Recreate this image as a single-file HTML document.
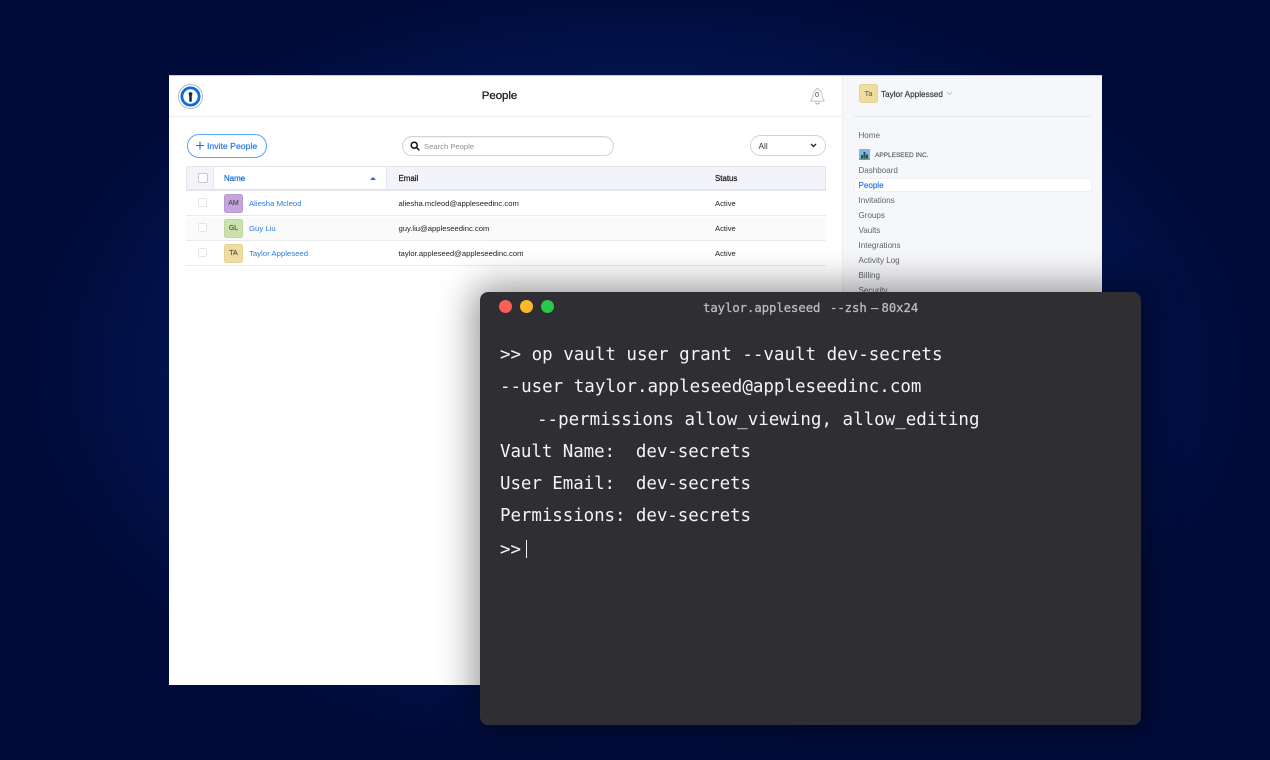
<!DOCTYPE html>
<html><head><meta charset="utf-8"><style>
*{box-sizing:border-box}
html,body{margin:0;padding:0}
body{width:1270px;height:760px;overflow:hidden;position:relative;background:radial-gradient(ellipse 610px 390px at 640px 370px,#062a64 0%,#05235c 45%,#02134c 75%,#000b3a 100%),#000b3a;font-family:"Liberation Sans",sans-serif}
.a{position:absolute;white-space:nowrap}
#app{position:absolute;left:169px;top:75px;width:933px;height:610px;background:#fff;border-top:1px solid #c9cbe0;overflow:hidden;filter:blur(.3px)}
#side{position:absolute;left:673px;top:0;width:260px;height:610px;background:#f6f7fb;border-left:1px solid #eceef2}
.t{font-size:7.65px;color:#222;line-height:10px;margin-top:1px}
.h{font-size:7.9px;color:#1e1e1e;line-height:10px;-webkit-text-stroke:.25px currentColor;margin-top:1px}
.l{font-size:7.75px;color:#1a6fd8;line-height:10px;margin-top:1px}
.nav{font-size:8.05px;color:#5f6368;line-height:10px;margin-top:1px}
.ln{position:absolute;height:1.3px;background:#e9eaec}
.cb{position:absolute;width:9px;height:9px;border:1px solid #e4e5e8;border-radius:2px;background:#fff}
.av{position:absolute;width:19px;height:19px;border-radius:2.5px;font-size:7px;text-align:center;color:#555;-webkit-text-stroke:.2px #555;line-height:18px}
#term{position:absolute;left:480px;top:292px;width:661px;height:433px;background:#2f2e33;border-radius:8px;font-family:"DejaVu Sans Mono","Liberation Mono",monospace;color:#f4f4f4}
.c{position:absolute;top:8px;width:13px;height:13px;border-radius:50%}
.tl{position:absolute;left:20px;font-size:17.5px;line-height:24px;white-space:pre}
.tt{position:absolute;top:8.5px;font-size:12.2px;line-height:15px;color:#bcbcbe;-webkit-text-stroke:.3px #bcbcbe;white-space:pre}
</style></head><body>
<div id="app">
<svg class="a" style="left:9px;top:8px" width="25" height="25" viewBox="0 0 25 25"><circle cx="12.5" cy="12.5" r="12" fill="#fff" stroke="#b6bac0"/><circle cx="12.5" cy="12.5" r="8.6" fill="none" stroke="#0a6be0" stroke-width="2.8"/><circle cx="12.5" cy="12.5" r="6.4" fill="#fff"/><circle cx="12.5" cy="10" r="1.9" fill="#0c2a5e"/><rect x="11.2" y="9" width="2.6" height="9" rx="1.2" fill="#0c2a5e"/></svg>
<div class="a" style="left:0;width:661px;top:13px;text-align:center;font-size:11.4px;color:#222;line-height:15px;-webkit-text-stroke:.35px #222">People</div>
<svg class="a" style="left:639.500px;top:11px" width="17" height="19" viewBox="0 0 17 19" fill="none" stroke="#b8b8b8" stroke-width=".8"><path d="M8.5 1.5c-1 0-1.4.7-1.4 1.3C4.6 3.8 4 5.8 3.900 8c-.1 2.500-.8 4-2 5.200v1h13.200v-1c-1.200-1.200-1.900-2.700-2-5.200-.1-2.200-.7-4.200-3.200-5.200 0-.6-.4-1.300-1.400-1.300z" fill="#fcfcfc"/><path d="M6.500 15.500c.3 1 1.100 1.500 2 1.500s1.700-.5 2-1.500" stroke-width="1.200"/></svg>
<div class="a" style="left:645px;top:16px;width:6px;font-size:7px;color:#444;line-height:8px;text-align:center">0</div>
<div class="ln" style="left:0;top:40px;width:673px;height:1px;background:#eeeff1"></div>

<div class="a" style="left:17.500px;top:58px;width:80px;height:23.500px;border:1px solid #5ba2f0;border-radius:12px;background:#fff"></div>
<svg class="a" style="left:26.500px;top:65px" width="8" height="9" viewBox="0 0 8 9"><path d="M4 .5v8M0 4.500h8" stroke="#1a6fd8" stroke-width="1.100"/></svg>
<div class="a" style="left:38px;top:65px;font-size:8.700px;color:#2a7be0;line-height:10px;-webkit-text-stroke:.2px #2a7be0">Invite People</div>

<div class="a" style="left:233px;top:59.500px;width:212px;height:20px;border:1px solid #d4d5d8;border-radius:10px;box-shadow:inset 0 1px 1px #f0f0f0"></div>
<svg class="a" style="left:240.500px;top:64.500px" width="10" height="10" viewBox="0 0 10 10" fill="none" stroke="#111" stroke-width="1.500"><circle cx="4.200" cy="4.200" r="3"/><path d="M6.500 6.500l2.800 2.800"/></svg>
<div class="a" style="left:255px;top:66px;font-size:7.650px;color:#8c8f94;line-height:10px">Search People</div>

<div class="a" style="left:581px;top:59px;width:76px;height:21px;border:1px solid #d4d5d8;border-radius:10.500px"></div>
<div class="a" style="left:589.500px;top:65px;font-size:8.300px;color:#333;line-height:10px">All</div>
<svg class="a" style="left:641px;top:67px" width="7" height="5" viewBox="0 0 7 5" fill="none" stroke="#222" stroke-width="1.300"><path d="M1 1l2.500 2.500L6 1"/></svg>

<div class="a" style="left:17px;top:90px;width:640px;height:25px;background:#f3f4f9;border:1px solid #e3e5ea;border-bottom-width:2px;border-radius:2px 2px 0 0"></div>
<div class="a" style="left:44px;top:91px;width:174px;height:22px;background:#fff;border-left:1px solid #e8e9ee;border-right:1px solid #e3e5ea"></div>
<div class="cb" style="left:29px;top:97px;width:10px;height:10px;border-color:#c5c7cc"></div>
<div class="a h" style="left:55px;top:97px;color:#1a6fd8">Name</div>
<div class="a" style="left:201px;top:101px;border:3px solid transparent;border-bottom:3.500px solid #1a6fd8;border-top:0;width:0;height:0"></div>
<div class="a h" style="left:229.500px;top:97px">Email</div>
<div class="a h" style="left:546px;top:97px">Status</div>

<div class="a" style="left:17px;top:141px;width:640px;height:24px;background:#fafafa"></div>
<div class="ln" style="left:17px;top:139px;width:640px"></div>
<div class="ln" style="left:17px;top:164px;width:640px"></div>
<div class="ln" style="left:17px;top:189px;width:640px"></div>

<div class="cb" style="left:29px;top:122px"></div>
<div class="av" style="left:55px;top:118px;background:#c6a4e0;border:1px solid #bb9ad3">AM</div>
<div class="a l" style="left:80px;top:122px;color:#2a7be0">Aliesha Mcleod</div>
<div class="a t" style="left:229.500px;top:122px">aliesha.mcleod@appleseedinc.com</div>
<div class="a t" style="left:546px;top:122px">Active</div>

<div class="cb" style="left:29px;top:147px"></div>
<div class="av" style="left:55px;top:143px;background:#cbe2ae;border:1px solid #c0d7a4">GL</div>
<div class="a l" style="left:80px;top:147px;color:#2a7be0">Guy Liu</div>
<div class="a t" style="left:229.500px;top:147px">guy.liu@appleseedinc.com</div>
<div class="a t" style="left:546px;top:147px">Active</div>

<div class="cb" style="left:29px;top:172px"></div>
<div class="av" style="left:55px;top:168px;background:#f0dc9e;border:1px solid #e5d294">TA</div>
<div class="a l" style="left:80px;top:172px;color:#2a7be0">Taylor Appleseed</div>
<div class="a t" style="left:229.500px;top:172px">taylor.appleseed@appleseedinc.com</div>
<div class="a t" style="left:546px;top:172px">Active</div>

<div id="side">
<div class="av" style="left:16px;top:8px;background:#f0dc9e;border:1px solid #e5d294;-webkit-text-stroke:0;font-size:7.500px;color:#555">Ta</div>
<div class="a" style="left:38px;top:14px;font-size:8.200px;color:#333;line-height:10px;-webkit-text-stroke:.15px #333">Taylor Applessed</div>
<svg class="a" style="left:103px;top:15px" width="7" height="5" viewBox="0 0 7 5" fill="none" stroke="#b5b8be" stroke-width=".8"><path d="M1 1l2.500 2.500L6 1"/></svg>
<div class="ln" style="left:11px;top:40px;width:237px;height:1px;background:#e8e9ed"></div>
<div class="a nav" style="left:15.500px;top:54px">Home</div>
<svg class="a" style="left:16px;top:73px" width="11" height="11" viewBox="0 0 11 11"><rect width="11" height="11" rx="1" fill="#7eb6e8"/><rect y="9.500" width="11" height="1.500" fill="#5fb35a"/><path d="M2 9.500V6h2v3.500zM4.500 9.500V3h2v6.500zM7 9.500V5.500h2v4z" fill="#2d4a5e"/></svg>
<div class="a" style="left:32px;top:74.500px;font-size:6.500px;color:#62666b;line-height:9px;-webkit-text-stroke:.2px #62666b">APPLESEED INC.</div>
<div class="a nav" style="left:15.500px;top:89px">Dashboard</div>
<div class="a" style="left:11px;top:102px;width:238px;height:14px;background:#fff;border:1px solid #eeeff3;border-radius:3px"></div>
<div class="a nav" style="left:15.500px;top:104px;color:#2a7be0;-webkit-text-stroke:.2px #2a7be0">People</div>
<div class="a nav" style="left:15.500px;top:119px">Invitations</div>
<div class="a nav" style="left:15.500px;top:134px">Groups</div>
<div class="a nav" style="left:15.500px;top:149px">Vaults</div>
<div class="a nav" style="left:15.500px;top:164px">Integrations</div>
<div class="a nav" style="left:15.500px;top:179px">Activity Log</div>
<div class="a nav" style="left:15.500px;top:194px">Billing</div>
<div class="a nav" style="left:15.500px;top:209px">Security</div>
</div>
</div>
<div style="position:absolute;left:480px;top:292px;width:661px;height:433px;border-radius:8px;box-shadow:0 0 36px 6px rgba(0,0,0,.42)"></div>
<div id="term">
<div class="c" style="left:19px;background:#fb5f57"></div>
<div class="c" style="left:40px;background:#fdb72e"></div>
<div class="c" style="left:61px;background:#2ac84a"></div>
<div class="tt" style="left:223px">taylor.appleseed</div>
<div class="tt" style="left:350px">--zsh</div>
<div class="tt" style="left:391px">—</div>
<div class="tt" style="left:401.500px">80x24</div>
<div class="tl" style="top:50.500px">&gt;&gt; op vault user grant --vault dev-secrets</div>
<div class="tl" style="top:83px">--user taylor.appleseed@appleseedinc.com</div>
<div class="tl" style="left:57px;top:115.500px">--permissions allow_viewing, allow_editing</div>
<div class="tl" style="top:147.800px;letter-spacing:-.08px">Vault Name:  dev-secrets</div>
<div class="tl" style="top:180px;letter-spacing:-.08px">User Email:  dev-secrets</div>
<div class="tl" style="top:212.300px;letter-spacing:-.08px">Permissions: dev-secrets</div>
<div class="tl" style="top:245.500px">&gt;&gt;</div>
<div class="a" style="left:46px;top:248px;width:1.200px;height:18px;background:#f4f4f4"></div>
</div>
</body></html>
